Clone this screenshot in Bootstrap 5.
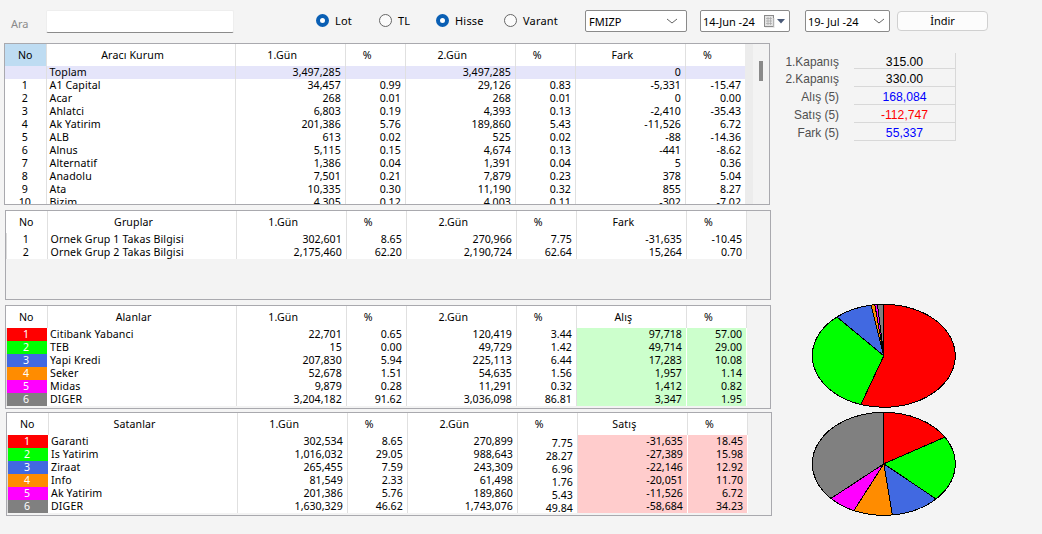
<!DOCTYPE html>
<html lang="tr"><head><meta charset="utf-8"><title>Takas</title>
<link href="https://cdn.jsdelivr.net/npm/bootstrap@5.3.0/dist/css/bootstrap.min.css" rel="stylesheet">
<style>
html,body{height:100%}
body{background:#f4f4f4;font-family:"Noto Sans","Liberation Sans",sans-serif;font-size:10.6px;line-height:13px;color:#000;overflow:hidden;width:1042px;height:534px}
.topbar{height:43px;padding:9px 0 0 11px}
.ara-lbl{color:#8a8a8a;width:35px;font-size:11px;padding-top:8px}
.ara-in{width:188px;height:23px;margin-top:1px;background:#fff;border:1px solid #eee;border-bottom:1px solid #8b8b8b;border-radius:2px}
.rad{display:flex;align-items:center;gap:6px;height:23px;font-size:11px;letter-spacing:.2px}
.rad i{width:13px;height:13px;border-radius:50%;display:block;border:1px solid #666;background:#fbfbfb}
.rad i.on{border:4px solid #0a5fb4;background:#fff}
.r-lot{margin-left:82px;width:63px}.r-tl{width:57px}.r-his{width:68px}.r-var{width:81px}
.ctl{height:22px;margin-top:1px;border:1px solid #8a8a8a;border-radius:2px;background:#fff;display:flex;align-items:center;padding-left:2px;font-size:11px;justify-content:space-between}
.ctl svg{flex:none}
.c-sym{width:102px;padding-left:3px}.c-d1{width:90px;margin-left:13px}.c-d2{width:85px;margin-left:15px}
.indir{width:91px;height:20px;margin:2px 0 0 7px;border:1px solid #d0d0d0;border-radius:4px;background:#fcfcfc;font-size:11px;padding:0;line-height:18px;color:#000}
.leftcol{width:771px;flex:none;padding-left:4px}
.gridbox{border:1px solid #a9a9ae;background:#f3f3f3;overflow:hidden;position:relative;width:766px}
.g1{height:162px}
.g2{height:90px;margin:5px 0 0 1px}
.g3{height:104px;margin:5px 0 0 1px}
.g4{height:104px;margin:3px 0 0 2px}
table.tk{table-layout:fixed;width:741px;margin:0;border-collapse:collapse;background:#fff;color:#000}
table.tk th,table.tk td{padding:0 3px;border:0;border-right:1px solid #e0e0e0;height:13px;line-height:13px;font-weight:400;white-space:nowrap;overflow:hidden;background:transparent;box-shadow:none;color:#000}
table.tk thead th{height:22px;text-align:center;vertical-align:top;padding:5px 16px 0 0;letter-spacing:.12px}
table.tk thead th:first-child{padding-right:0}
table.tk thead th.hl{background:#bedcf2}
table.tk td{text-align:right;padding-right:4px}
table.tk td.no{text-align:center}
table.tk td.nm{text-align:left;letter-spacing:.12px}
table.tk tr.tot td{background:#e5e5fa}
.g2 table.tk td.no,.g3 table.tk td.no,.g4 table.tk td.no{box-shadow:inset 1px 0 #dcdcdc}
table.tk td.c1,table.tk td.c2,table.tk td.c3,table.tk td.c4,table.tk td.c5,table.tk td.c6{color:#fff;border-right:0}
td.c1{background:#f00!important}td.c2{background:#0f0!important}td.c3{background:#4169e1!important}td.c4{background:#ff8c00!important}td.c5{background:#f0f!important}td.c6{background:#808080!important}
td.gr{background:#ccffcc!important;border-right-color:#fff!important}
td.rd{background:#ffcccc!important;border-right-color:#fff!important}
.off{position:relative;top:2px}
.band{position:absolute;left:740px;top:0;bottom:0;width:8px;background:#ececec}
.thumb{position:absolute;left:754px;top:17px;width:4px;height:20px;background:#8a8a8a}
.rightcol{width:271px;padding-top:10px}
.kv{display:flex;height:18px;font-family:"Liberation Sans",sans-serif;font-size:12.2px;line-height:13px}
.kv:first-child{height:16px}
.kv span:first-child{width:68px;text-align:right;color:#505050;padding-top:4px;font-size:11.9px}
.kv span:last-child{width:102px;margin-left:15px;text-align:center;border-right:1px solid #d8d8d8;border-bottom:1px solid #d8d8d8;padding-top:4px}
.kv:first-child span{padding-top:3px!important}
.pies{margin:162px 0 0 40px}
.pies svg{display:block}
.p2{margin-top:2px}
</style></head><body>
<div class="topbar d-flex align-items-start">
<div class="ara-lbl">Ara</div><div class="ara-in"></div>
<div class="rad r-lot"><i class="on"></i>Lot</div>
<div class="rad r-tl"><i></i>TL</div>
<div class="rad r-his"><i class="on"></i>Hisse</div>
<div class="rad r-var"><i></i>Varant</div>
<div class="ctl c-sym"><span>FMIZP</span><svg width="12" height="6" class="me-2"><path d="M1 1l5 4 5-4" fill="none" stroke="#666"/></svg></div>
<div class="ctl c-d1"><span>14-Jun -24</span><svg width="26" height="14" viewBox="0 0 26 14"><rect x="1.5" y="1.5" width="9" height="11" fill="#e4e4e4" stroke="#8a8a8a"/><path d="M3 4.5h6M3 7h6M3 9.500h6M5 3v8M7.500 3v8" stroke="#a8a8a8" stroke-width=".7"/><path d="M11 4v10H2" fill="none" stroke="#ddd"/><path d="M14 5h8l-4 4.500z" fill="#4a5a78"/></svg></div>
<div class="ctl c-d2"><span>19- Jul -24</span><svg width="12" height="6" class="me-1"><path d="M1 1l5 4 5-4" fill="none" stroke="#666"/></svg></div>
<button class="indir">İndir</button>
</div>
<div class="d-flex">
<div class="leftcol" id="L"></div>
<div class="rightcol">
<div class="kv"><span>1.Kapanış</span><span>315.00</span></div>
<div class="kv"><span>2.Kapanış</span><span>330.00</span></div>
<div class="kv"><span>Alış (5)</span><span style="color:#00f">168,084</span></div>
<div class="kv"><span>Satış (5)</span><span style="color:#f00">-112,747</span></div>
<div class="kv"><span>Fark (5)</span><span style="color:#00f">55,337</span></div>
<div class="pies">
<svg id="p1" width="146" height="106" shape-rendering="crispEdges"></svg>
<svg id="p2" class="p2" width="146" height="106" shape-rendering="crispEdges"></svg>
</div>
</div>
</div>
<script>
const cols=[41,189,110,60,110,60,110,60];
function colg(){return '<colgroup>'+cols.map(w=>`<col style="width:${w}px">`).join('')+'</colgroup>'}
function tbl(cls,heads,rows,opt={}){
 let h='<thead><tr>'+heads.map((t,i)=>`<th class="${i==0&&opt.hl?'hl':''}">${t}</th>`).join('')+'</tr></thead><tbody>';
 rows.forEach(r=>{
  h+=`<tr class="${r[0]===''?'tot':''}">`;
  r.forEach((v,i)=>{
   let c=i==0?'no':i==1?'nm':'';
   if(i==0&&opt.color)c+=' c'+v;
   if(i>=6&&opt.tail)c+=' '+opt.tail;
   let x=(opt.off&&i==5)?`<span class="off">${v}</span>`:v;
   h+=`<td class="${c}">${x}</td>`;
  });
  h+='</tr>';
 });
 h+='</tbody>';
 return `<div class="gridbox ${cls}">${opt.thumb?'<div class="band"></div><div class="thumb"></div>':''}<table class="table tk">${colg()}${h}</table></div>`;
}
const s=t=>t.trim().split('\n').map(l=>l.split('|'));
const R1=s(`|Toplam|3,497,285||3,497,285||0|
1|A1 Capital|34,457|0.99|29,126|0.83|-5,331|-15.47
2|Acar|268|0.01|268|0.01|0|0.00
3|Ahlatci|6,803|0.19|4,393|0.13|-2,410|-35.43
4|Ak Yatirim|201,386|5.76|189,860|5.43|-11,526|6.72
5|ALB|613|0.02|525|0.02|-88|-14.36
6|Alnus|5,115|0.15|4,674|0.13|-441|-8.62
7|Alternatif|1,386|0.04|1,391|0.04|5|0.36
8|Anadolu|7,501|0.21|7,879|0.23|378|5.04
9|Ata|10,335|0.30|11,190|0.32|855|8.27
10|Bizim|4,305|0.12|4,003|0.11|-302|-7.02`);
const R2=s(`1|Ornek Grup 1 Takas Bilgisi|302,601|8.65|270,966|7.75|-31,635|-10.45
2|Ornek Grup 2 Takas Bilgisi|2,175,460|62.20|2,190,724|62.64|15,264|0.70`);
const R3=s(`1|Citibank Yabanci|22,701|0.65|120,419|3.44|97,718|57.00
2|TEB|15|0.00|49,729|1.42|49,714|29.00
3|Yapi Kredi|207,830|5.94|225,113|6.44|17,283|10.08
4|Seker|52,678|1.51|54,635|1.56|1,957|1.14
5|Midas|9,879|0.28|11,291|0.32|1,412|0.82
6|DIGER|3,204,182|91.62|3,036,098|86.81|3,347|1.95`);
const R4=s(`1|Garanti|302,534|8.65|270,899|7.75|-31,635|18.45
2|Is Yatirim|1,016,032|29.05|988,643|28.27|-27,389|15.98
3|Ziraat|265,455|7.59|243,309|6.96|-22,146|12.92
4|Info|81,549|2.33|61,498|1.76|-20,051|11.70
5|Ak Yatirim|201,386|5.76|189,860|5.43|-11,526|6.72
6|DIGER|1,630,329|46.62|1,743,076|49.84|-58,684|34.23`);
document.getElementById('L').innerHTML=
 tbl('g1',['No','Aracı Kurum','1.Gün','%','2.Gün','%','Fark','%'],R1,{hl:1,thumb:1})+
 tbl('g2',['No','Gruplar','1.Gün','%','2.Gün','%','Fark','%'],R2)+
 tbl('g3',['No','Alanlar','1.Gün','%','2.Gün','%','Alış','%'],R3,{color:1,tail:'gr'})+
 tbl('g4',['No','Satanlar','1.Gün','%','2.Gün','%','Satış','%'],R4,{color:1,tail:'rd',off:1});
const C=['#f00','#0f0','#4169e1','#ff8c00','#f0f','#808080'];
function pie(id,vals,cx,cy,rx,ry){
 const tot=vals.reduce((a,b)=>a+b,0);let a=0,h='';
 const P=t=>{const k=1/Math.hypot(Math.sin(t)/rx,Math.cos(t)/ry);return (cx+k*Math.sin(t)).toFixed(2)+' '+(cy-k*Math.cos(t)).toFixed(2)};
 vals.forEach((v,i)=>{
  const b=a+v/tot*2*Math.PI;
  h+=`<path d="M${cx} ${cy}L${P(a)}A${rx} ${ry} 0 ${b-a>Math.PI?1:0} 1 ${P(b)}Z" fill="${C[i]}" stroke="#000" stroke-width="1"/>`;
  a=b;
 });
 document.getElementById(id).innerHTML=h;
}
pie('p1',[57,29,10.08,1.14,.82,1.95],72.8,52.8,71.5,51.5);
pie('p2',[18.45,15.98,12.92,11.70,6.72,34.23],72.8,52.8,71.5,51.5);
</script>
<script src="https://cdn.jsdelivr.net/npm/bootstrap@5.3.0/dist/js/bootstrap.bundle.min.js"></script>
</body></html>
